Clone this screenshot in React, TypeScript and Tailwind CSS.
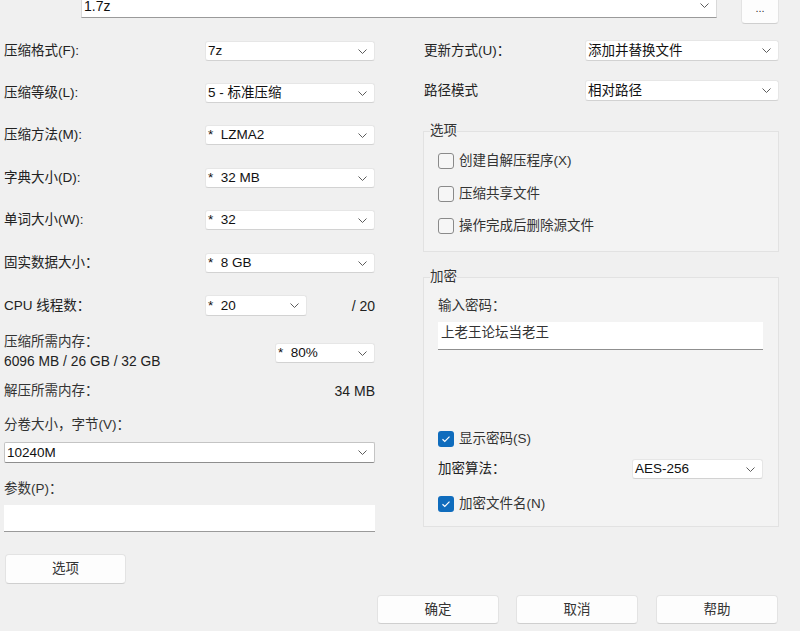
import React from 'react';

const Chevron: React.FC = () => (
  <svg width="9" height="5" viewBox="0 0 9 5" fill="none" className="shrink-0">
    <path d="M0.5 0.5 L4.5 4.5 L8.5 0.5" stroke="#5c5c5c" strokeWidth="1" />
  </svg>
);

const Select: React.FC<{ value: string; className?: string }> = ({ value, className = '' }) => (
  <div
    className={`flex items-center justify-between bg-white border border-[#e6e6e6] border-b-[#d2d2d2] rounded-[3px] pl-[2px] pr-[7px] text-[#111] ${className}`}
  >
    <span className="whitespace-pre leading-none">{value}</span>
    <Chevron />
  </div>
);

const CheckBox: React.FC<{ label: string; checked?: boolean; className?: string }> = ({
  label,
  checked = false,
  className = '',
}) => (
  <div className={`flex items-center h-[20px] ${className}`}>
    {checked ? (
      <span className="w-[16px] h-[16px] rounded-[3px] bg-[#0f6cbd] flex items-center justify-center">
        <svg width="10" height="8" viewBox="0 0 10 8" fill="none">
          <path d="M1.5 4.2 L3.8 6.4 L8.5 1.6" stroke="white" strokeWidth="1.2" />
        </svg>
      </span>
    ) : (
      <span className="w-[16px] h-[16px] rounded-[3px] border border-[#8a8a8a] bg-[#f6f6f6]" />
    )}
    <span className="ml-[5px] text-[#333]">{label}</span>
  </div>
);

const Button: React.FC<{ label: string; className?: string }> = ({ label, className = '' }) => (
  <div
    className={`flex items-center justify-center bg-[#fdfdfd] border border-[#e3e3e3] border-b-[#cfcfcf] rounded-[4px] text-[#333] ${className}`}
  >
    {label}
  </div>
);

const Row: React.FC<{ label: string; children: React.ReactNode; className?: string }> = ({
  label,
  children,
  className = '',
}) => (
  <div className={`flex items-center justify-between ${className}`}>
    <span className="text-[#222]">{label}</span>
    {children}
  </div>
);

export default function App() {
  return (
    <div className="w-[800px] h-[631px] overflow-hidden bg-[#f0f0f0] text-[13.5px] leading-[20px] text-[#222] font-['Liberation_Sans','Noto_Sans_CJK_SC',sans-serif]">
      {/* archive path */}
      <div className="flex items-start -mt-[7px] h-[31px]">
        <span className="w-[81px] pl-[4px] -mt-[10px] text-[#222]">压缩包(A):</span>
        <div className="w-[636px] h-[25px] flex items-end justify-between bg-white border border-[#d9d9d9] border-b-[#9a9a9a] pl-[2px] pr-[7px] pb-[1px]">
          <span className="text-[#111] text-[14px]">1.7z</span>
          <span className="mb-[8px]">
            <Chevron />
          </span>
        </div>
        <Button label="..." className="ml-[24px] w-[38px] h-[31px] text-[11px] leading-none" />
      </div>

      <div className="flex">
        {/* left column */}
        <div className="ml-[4px] w-[371px] flex flex-col">
          <Row label="压缩格式(F):" className="mt-[17px]">
            <Select value="7z" className="w-[170px] h-[20px]" />
          </Row>
          <Row label="压缩等级(L):" className="mt-[22px]">
            <Select value="5 - 标准压缩" className="w-[170px] h-[20px]" />
          </Row>
          <Row label="压缩方法(M):" className="mt-[22px]">
            <Select value="*  LZMA2" className="w-[170px] h-[20px]" />
          </Row>
          <Row label="字典大小(D):" className="mt-[23px]">
            <Select value="*  32 MB" className="w-[170px] h-[20px]" />
          </Row>
          <Row label="单词大小(W):" className="mt-[22px]">
            <Select value="*  32" className="w-[170px] h-[20px]" />
          </Row>
          <Row label="固实数据大小：" className="mt-[23px]">
            <Select value="*  8 GB" className="w-[170px] h-[20px]" />
          </Row>
          <div className="flex items-center mt-[22px]">
            <span className="flex-1">CPU 线程数：</span>
            <Select value="*  20" className="w-[102px] h-[21px]" />
            <span className="w-[68px] text-right text-[14px]">/ 20</span>
          </div>
          <div className="flex items-center justify-between mt-[16px]">
            <div className="flex flex-col">
              <span className="text-[#333]">压缩所需内存：</span>
              <span className="text-[13.8px]">6096 MB / 26 GB / 32 GB</span>
            </div>
            <Select value="*  80%" className="w-[100px] h-[20px] mt-[2px]" />
          </div>
          <div className="flex items-center justify-between mt-[9px]">
            <span className="text-[#333]">解压所需内存：</span>
            <span className="text-[14px]">34 MB</span>
          </div>
          <span className="mt-[14px] text-[#333]">分卷大小，字节(V)：</span>
          <div className="mt-[7px] h-[21px] flex items-center justify-between bg-white border border-[#c4c4c4] border-b-[#8e8e8e] rounded-[2px] pl-[2px] pr-[7px]">
            <span className="text-[#111]">10240M</span>
            <Chevron />
          </div>
          <span className="mt-[16px] text-[#333]">参数(P)：</span>
          <div className="mt-[6px] h-[27px] bg-white border-b border-[#9a9a9a]" />
          <Button label="选项" className="mt-[22px] ml-[1px] w-[121px] h-[30px]" />
        </div>

        {/* right column */}
        <div className="ml-[48px] w-[356px] flex flex-col">
          <Row label="更新方式(U)：" className="mt-[16px] pl-[1px]">
            <Select value="添加并替换文件" className="w-[194px] h-[21px]" />
          </Row>
          <Row label="路径模式" className="mt-[19px] pl-[1px]">
            <Select value="相对路径" className="w-[194px] h-[21px]" />
          </Row>

          <fieldset className="mt-[20px] border border-[#e2e2e2] bg-[#f3f3f3] px-[6px] pb-[15px]">
            <legend className="px-0 text-[#333] leading-[20px]">选项</legend>
            <div className="pl-[8px] flex flex-col">
              <CheckBox label="创建自解压程序(X)" className="mt-[10px]" />
              <CheckBox label="压缩共享文件" className="mt-[13px]" />
              <CheckBox label="操作完成后删除源文件" className="mt-[12px]" />
            </div>
          </fieldset>

          <fieldset className="mt-[15px] border border-[#e2e2e2] bg-[#f3f3f3] px-[6px] pb-[12px]">
            <legend className="px-0 text-[#333] leading-[20px]">加密</legend>
            <div className="pl-[8px] pr-[9px] flex flex-col">
              <span className="mt-[9px] text-[#333]">输入密码：</span>
              <div className="mt-[6px] h-[28px] bg-white border-b border-[#8f8f8f] pl-[3px] pt-[1px] text-[#333]">
                上老王论坛当老王
              </div>
              <CheckBox label="显示密码(S)" checked className="mt-[79px]" />
              <Row label="加密算法：" className="mt-[10px]">
                <Select value="AES-256" className="w-[131px] h-[20px]" />
              </Row>
              <CheckBox label="加密文件名(N)" checked className="mt-[15px]" />
            </div>
          </fieldset>
        </div>
      </div>

      {/* bottom buttons */}
      <div className="flex justify-end pr-[22px] mt-[11px]">
        <Button label="确定" className="w-[122px] h-[29px]" />
        <Button label="取消" className="ml-[17px] w-[122px] h-[29px]" />
        <Button label="帮助" className="ml-[18px] w-[122px] h-[29px]" />
      </div>
    </div>
  );
}
